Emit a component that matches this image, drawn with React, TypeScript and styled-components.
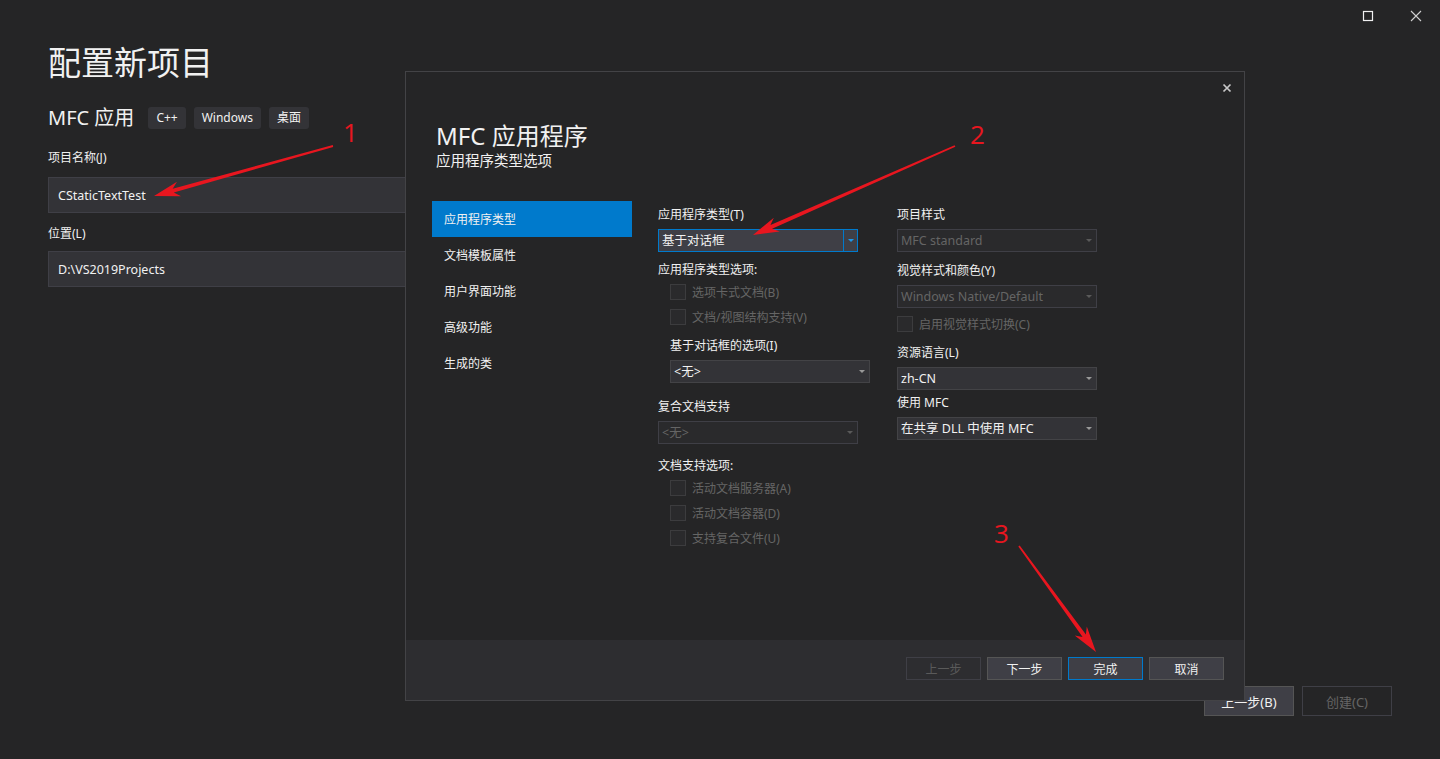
import React from "react";
import styled, { createGlobalStyle, css } from "styled-components";

const FONT = `"Noto Sans", "Noto Sans CJK SC", sans-serif`;

const GlobalStyle = createGlobalStyle`
  html, body { margin: 0; padding: 0; background: #252526; }
  body { font-family: ${FONT}; color: #f1f1f1; overflow: hidden; }
  * { box-sizing: border-box; }
`;

const Page = styled.div`
  position: relative;
  width: 1440px;
  height: 759px;
  display: flex;
  flex-direction: column;
  background: #252526;
`;

const TitleBar = styled.div`
  height: 32px;
  display: flex;
  justify-content: flex-end;
`;

const WinButton = styled.div`
  width: 48px;
  height: 32px;
  display: flex;
  align-items: center;
  justify-content: center;
`;

const Main = styled.div`
  flex: 1;
  display: flex;
  flex-direction: column;
  padding: 0 48px 43px;
`;

const PageTitle = styled.h1`
  margin: 7px 0 0;
  font-family: "Noto Sans CJK SC", sans-serif;
  font-size: 33px;
  line-height: 44px;
  font-weight: 400;
  color: #f1f1f1;
`;

const TemplateRow = styled.div`
  margin-top: 24px;
  height: 22px;
  display: flex;
  align-items: center;
  gap: 8px;
`;

const TemplateName = styled.span`
  font-size: 20px;
  line-height: 22px;
  margin-right: 6px;
`;

const Tag = styled.span`
  height: 22px;
  padding: 0 8px;
  background: #333337;
  border-radius: 3px;
  font-size: 12px;
  line-height: 22px;
  color: #f1f1f1;
`;

const FieldLabel = styled.div<{ $mt: number }>`
  margin-top: ${(p) => p.$mt}px;
  font-size: 12px;
  line-height: 18px;
  color: #f1f1f1;
`;

const TextInput = styled.div<{ $mt: number }>`
  margin-top: ${(p) => p.$mt}px;
  width: 900px;
  height: 36px;
  background: #333337;
  border: 1px solid #3f3f46;
  padding: 0 9px;
  display: flex;
  align-items: center;
  font-size: 12.5px;
  color: #f1f1f1;
`;

const Spacer = styled.div`
  flex: 1;
`;

const BottomBar = styled.div`
  display: flex;
  justify-content: flex-end;
  gap: 8px;
`;

const PageButton = styled.div<{ $disabled?: boolean }>`
  width: 90px;
  height: 30px;
  display: flex;
  align-items: center;
  justify-content: center;
  font-size: 13px;
  border: 1px solid ${(p) => (p.$disabled ? "#3f3f46" : "#555555")};
  background: ${(p) => (p.$disabled ? "transparent" : "#3f3f46")};
  color: ${(p) => (p.$disabled ? "#656565" : "#f1f1f1")};
`;

/* ---------- Dialog ---------- */

const Dialog = styled.div`
  position: absolute;
  left: 405px;
  top: 71px;
  width: 840px;
  height: 630px;
  border: 1px solid #434346;
  background: #252526;
  display: flex;
  flex-direction: column;
  z-index: 5;
`;

const DialogClose = styled.div`
  position: absolute;
  right: 9px;
  top: 8px;
  width: 16px;
  height: 16px;
  display: flex;
  align-items: center;
  justify-content: center;
`;

const DialogBody = styled.div`
  flex: 1;
  padding: 49px 0 0 26px;
`;

const DialogTitle = styled.div`
  padding-left: 4px;
  font-size: 24px;
  line-height: 29px;
  color: #f1f1f1;
`;

const DialogSubtitle = styled.div`
  padding-left: 4px;
  font-size: 14.5px;
  line-height: 20px;
  color: #f1f1f1;
`;

const Content = styled.div`
  margin-top: 31px;
  display: flex;
  gap: 26px;
`;

const Nav = styled.div`
  width: 200px;
  display: flex;
  flex-direction: column;
`;

const NavItem = styled.div<{ $active?: boolean }>`
  height: 36px;
  padding: 2px 0 0 12px;
  font-size: 12px;
  line-height: 34px;
  color: #f1f1f1;
  background: ${(p) => (p.$active ? "#007acc" : "transparent")};
`;

const Column = styled.div<{ $w: number }>`
  width: ${(p) => p.$w}px;
  padding-top: 5px;
  display: flex;
  flex-direction: column;
`;

const Label = styled.div<{ $mt?: number; $ml?: number }>`
  margin-top: ${(p) => p.$mt ?? 0}px;
  margin-left: ${(p) => p.$ml ?? 0}px;
  font-size: 12px;
  line-height: 18px;
  color: #f1f1f1;
`;

type Variant = "active" | "normal" | "disabled";

const Select = styled.div<{ $v: Variant; $mt?: number; $ml?: number }>`
  margin-top: ${(p) => p.$mt ?? 0}px;
  margin-left: ${(p) => p.$ml ?? 0}px;
  width: 200px;
  height: 23px;
  display: flex;
  font-size: 12.5px;
  line-height: 21px;
  ${(p) =>
    p.$v === "active"
      ? css`
          border: 1px solid #007acc;
          background: #3f3f46;
          color: #f1f1f1;
        `
      : p.$v === "normal"
      ? css`
          border: 1px solid #434346;
          background: #333337;
          color: #f1f1f1;
        `
      : css`
          border: 1px solid #3f3f46;
          background: #2a2a2c;
          color: #656565;
        `}
`;

const SelectText = styled.span`
  flex: 1;
  padding-left: 3px;
  white-space: nowrap;
  overflow: hidden;
`;

const SelectArrow = styled.span<{ $v: Variant }>`
  width: 14px;
  display: flex;
  align-items: center;
  justify-content: center;
  border-left: 1px solid ${(p) => (p.$v === "active" ? "#007acc" : "transparent")};
  &::after {
    content: "";
    border-left: 3px solid transparent;
    border-right: 3px solid transparent;
    border-top: 3px solid ${(p) => (p.$v === "active" ? "#1c97ea" : p.$v === "normal" ? "#999999" : "#5a5a5a")};
    margin-left: ${(p) => (p.$v === "active" ? "0" : "-2px")};
  }
`;

const CheckRow = styled.div<{ $mt?: number; $ml?: number }>`
  margin-top: ${(p) => p.$mt ?? 0}px;
  margin-left: ${(p) => p.$ml ?? 0}px;
  height: 16px;
  display: flex;
  align-items: center;
  gap: 6px;
  font-size: 12px;
  color: #656565;
`;

const CheckBox = styled.span`
  width: 16px;
  height: 16px;
  border: 1px solid #3c3c3e;
  background: #2a2a2c;
`;

const DialogFooter = styled.div`
  height: 60px;
  background: #2d2d30;
  display: flex;
  justify-content: flex-end;
  align-items: flex-start;
  padding: 17px 20px 0 0;
  gap: 6px;
`;

const DialogButton = styled.div<{ $kind?: "default" | "primary" | "disabled" }>`
  width: 75px;
  height: 23px;
  display: flex;
  align-items: center;
  justify-content: center;
  font-size: 12px;
  border: 1px solid
    ${(p) => (p.$kind === "primary" ? "#007acc" : p.$kind === "disabled" ? "#3f3f46" : "#555555")};
  background: ${(p) => (p.$kind === "disabled" ? "#2d2d30" : "#3f3f46")};
  color: ${(p) => (p.$kind === "disabled" ? "#5a5a5a" : "#f1f1f1")};
`;

/* ---------- Annotations ---------- */

const Overlay = styled.svg`
  position: absolute;
  left: 0;
  top: 0;
  width: 1440px;
  height: 759px;
  pointer-events: none;
  z-index: 10;
`;

const RED = "#e8161f";

function arrowPoints(x1: number, y1: number, x2: number, y2: number): string {
  const head = 26;
  const notch = 20;
  const hw = 7.5;
  const w0 = 0.9;
  const w1 = 2;
  const dx = x2 - x1;
  const dy = y2 - y1;
  const len = Math.hypot(dx, dy);
  const ux = dx / len;
  const uy = dy / len;
  const nx = -uy;
  const ny = ux;
  const bx = x2 - ux * head;
  const by = y2 - uy * head;
  const cx = x2 - ux * notch;
  const cy = y2 - uy * notch;
  const pts: [number, number][] = [
    [x1 + nx * w0, y1 + ny * w0],
    [cx + nx * w1, cy + ny * w1],
    [bx + nx * hw, by + ny * hw],
    [x2, y2],
    [bx - nx * hw, by - ny * hw],
    [cx - nx * w1, cy - ny * w1],
    [x1 - nx * w0, y1 - ny * w0],
  ];
  return pts.map((p) => `${p[0].toFixed(1)},${p[1].toFixed(1)}`).join(" ");
}

const Annotations: React.FC = () => (
  <Overlay viewBox="0 0 1440 759">
    <polygon points={arrowPoints(333, 146, 154, 196)} fill={RED} />
    <polygon points={arrowPoints(955, 146, 753, 235)} fill={RED} />
    <polygon points={arrowPoints(1019, 546, 1096, 652)} fill={RED} />
    <g fill={RED} fontFamily='"Open Sans", "Noto Sans", sans-serif' fontWeight={400} fontSize={26}>
      <text x={343} y={142}>1</text>
      <text x={970} y={144}>2</text>
      <text x={994} y={543}>3</text>
    </g>
  </Overlay>
);

export default function App() {
  return (
    <>
      <GlobalStyle />
      <Page>
        <TitleBar>
          <WinButton>
            <svg width="12" height="12" viewBox="0 0 12 12">
              <rect x="1.5" y="1.5" width="9" height="9" fill="none" stroke="#f1f1f1" strokeWidth="1.2" />
            </svg>
          </WinButton>
          <WinButton>
            <svg width="12" height="12" viewBox="0 0 12 12">
              <path d="M1 1 L11 11 M11 1 L1 11" stroke="#d0d0d0" strokeWidth="1.1" />
            </svg>
          </WinButton>
        </TitleBar>
        <Main>
          <PageTitle>配置新项目</PageTitle>
          <TemplateRow>
            <TemplateName>MFC 应用</TemplateName>
            <Tag>C++</Tag>
            <Tag>Windows</Tag>
            <Tag>桌面</Tag>
          </TemplateRow>
          <FieldLabel $mt={20}>项目名称(J)</FieldLabel>
          <TextInput $mt={10}>CStaticTextTest</TextInput>
          <FieldLabel $mt={12}>位置(L)</FieldLabel>
          <TextInput $mt={8}>D:\VS2019Projects</TextInput>
          <Spacer />
          <BottomBar>
            <PageButton>上一步(B)</PageButton>
            <PageButton $disabled>创建(C)</PageButton>
          </BottomBar>
        </Main>

        <Dialog>
          <DialogClose>
            <svg width="10" height="10" viewBox="0 0 10 10">
              <path d="M1.5 1.5 L8.5 8.5 M8.5 1.5 L1.5 8.5" stroke="#c8c8c8" strokeWidth="1.7" />
            </svg>
          </DialogClose>
          <DialogBody>
            <DialogTitle>MFC 应用程序</DialogTitle>
            <DialogSubtitle>应用程序类型选项</DialogSubtitle>
            <Content>
              <Nav>
                <NavItem $active>应用程序类型</NavItem>
                <NavItem>文档模板属性</NavItem>
                <NavItem>用户界面功能</NavItem>
                <NavItem>高级功能</NavItem>
                <NavItem>生成的类</NavItem>
              </Nav>
              <Column $w={213}>
                <Label>应用程序类型(T)</Label>
                <Select $v="active" $mt={5}>
                  <SelectText>基于对话框</SelectText>
                  <SelectArrow $v="active" />
                </Select>
                <Label $mt={9}>应用程序类型选项:</Label>
                <CheckRow $mt={5} $ml={12}>
                  <CheckBox />
                  选项卡式文档(B)
                </CheckRow>
                <CheckRow $mt={9} $ml={12}>
                  <CheckBox />
                  文档/视图结构支持(V)
                </CheckRow>
                <Label $mt={12} $ml={12}>基于对话框的选项(I)</Label>
                <Select $v="normal" $mt={5} $ml={12}>
                  <SelectText>&lt;无&gt;</SelectText>
                  <SelectArrow $v="normal" />
                </Select>
                <Label $mt={15}>复合文档支持</Label>
                <Select $v="disabled" $mt={5}>
                  <SelectText>&lt;无&gt;</SelectText>
                  <SelectArrow $v="disabled" />
                </Select>
                <Label $mt={13}>文档支持选项:</Label>
                <CheckRow $mt={5} $ml={12}>
                  <CheckBox />
                  活动文档服务器(A)
                </CheckRow>
                <CheckRow $mt={9} $ml={12}>
                  <CheckBox />
                  活动文档容器(D)
                </CheckRow>
                <CheckRow $mt={9} $ml={12}>
                  <CheckBox />
                  支持复合文件(U)
                </CheckRow>
              </Column>
              <Column $w={200}>
                <Label>项目样式</Label>
                <Select $v="disabled" $mt={5}>
                  <SelectText>MFC standard</SelectText>
                  <SelectArrow $v="disabled" />
                </Select>
                <Label $mt={10}>视觉样式和颜色(Y)</Label>
                <Select $v="disabled" $mt={5}>
                  <SelectText>Windows Native/Default</SelectText>
                  <SelectArrow $v="disabled" />
                </Select>
                <CheckRow $mt={8}>
                  <CheckBox />
                  启用视觉样式切换(C)
                </CheckRow>
                <Label $mt={12}>资源语言(L)</Label>
                <Select $v="normal" $mt={5}>
                  <SelectText>zh-CN</SelectText>
                  <SelectArrow $v="normal" />
                </Select>
                <Label $mt={4}>使用 MFC</Label>
                <Select $v="normal" $mt={5}>
                  <SelectText>在共享 DLL 中使用 MFC</SelectText>
                  <SelectArrow $v="normal" />
                </Select>
              </Column>
            </Content>
          </DialogBody>
          <DialogFooter>
            <DialogButton $kind="disabled">上一步</DialogButton>
            <DialogButton>下一步</DialogButton>
            <DialogButton $kind="primary">完成</DialogButton>
            <DialogButton>取消</DialogButton>
          </DialogFooter>
        </Dialog>

        <Annotations />
      </Page>
    </>
  );
}
